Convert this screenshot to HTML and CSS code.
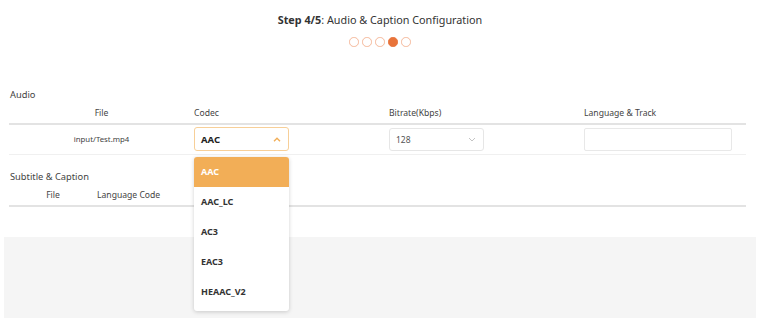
FILE: index.html
```html
<!DOCTYPE html>
<html lang="en">
<head>
  <meta charset="UTF-8" />
  <title>Audio & Caption Configuration</title>
  <link rel="stylesheet" href="styles.css">
</head>
<body>

  <header class="wizard-head">
    <h1 class="step-title"><b>Step 4/5</b>: Audio &amp; Caption Configuration</h1>
    <div class="steps">
      <span class="dot"></span>
      <span class="dot"></span>
      <span class="dot"></span>
      <span class="dot active"></span>
      <span class="dot"></span>
    </div>
  </header>

  <section class="block">
    <h2 class="block-title">Audio</h2>
    <div class="grid audio-grid head-row">
      <div class="cell center">File</div>
      <div class="cell">Codec</div>
      <div class="cell">Bitrate(Kbps)</div>
      <div class="cell">Language &amp; Track</div>
    </div>
    <div class="grid audio-grid body-row">
      <div class="cell center file-name">input/Test.mp4</div>
      <div class="cell">
        <div class="select-wrap">
          <div class="select open">
            <span class="value">AAC</span>
            <svg class="chev" width="8" height="5" viewBox="0 0 8 5"><path d="M1 4.2 L4 1.2 L7 4.2" fill="none" stroke="#f2ae57" stroke-width="1.4"/></svg>
          </div>
          <ul class="dropdown">
            <li class="selected">AAC</li>
            <li>AAC_LC</li>
            <li>AC3</li>
            <li>EAC3</li>
            <li>HEAAC_V2</li>
          </ul>
        </div>
      </div>
      <div class="cell">
        <div class="select">
          <span class="value plain">128</span>
          <svg class="chev" width="8" height="5" viewBox="0 0 8 5"><path d="M1 1 L4 4 L7 1" fill="none" stroke="#c4c4c4" stroke-width="1"/></svg>
        </div>
      </div>
      <div class="cell">
        <div class="text-input"></div>
      </div>
    </div>
  </section>

  <section class="block subtitle">
    <h2 class="block-title">Subtitle &amp; Caption</h2>
    <div class="grid sub-grid head-row">
      <div class="cell center">File</div>
      <div class="cell">Language Code</div>
    </div>
  </section>

  <div class="footer-area"></div>

</body>
</html>
```

FILE: styles.css
```css
:root {
  --color-accent: #e8733a;
  --color-dot: #f5b99b;
  --color-pick: #f2ae57;
  --color-text: #444;
  --color-line: #e3e3e3;
}

* {
  margin: 0;
  padding: 0;
  box-sizing: border-box;
}

body {
  font-family: "Noto Sans", "Liberation Sans", sans-serif;
  color: var(--color-text);
  background: white;
  font-size: 8.6px;
}

.wizard-head {
  text-align: center;
  padding-top: 11px;
}

.step-title {
  font-size: 10.8px;
  font-weight: normal;
  line-height: 18px;
  color: #333;
}

.step-title b {
  font-weight: bold;
}

.steps {
  display: flex;
  justify-content: center;
  gap: 3.4px;
  margin-top: 8px;
}

.dot {
  width: 9.5px;
  height: 9.5px;
  border-radius: 50%;
  border: 1px solid var(--color-dot);
}

.dot.active {
  background: var(--color-accent);
  border-color: var(--color-accent);
}

.block {
  padding: 0 14px 0 9px;
  margin-top: 41px;
}

.block.subtitle {
  margin-top: 15px;
}

.block-title {
  font-size: 9.3px;
  font-weight: normal;
  line-height: 14px;
  padding-left: 1px;
  margin-bottom: 2px;
}

.grid {
  display: grid;
}

.audio-grid {
  grid-template-columns: 185px 195px 195px 1fr;
}

.sub-grid {
  grid-template-columns: 88px 1fr;
}

.head-row {
  height: 21px;
  align-items: center;
  border-bottom: 2px solid var(--color-line);
  padding-bottom: 1px;
}

.body-row {
  height: 30px;
  align-items: center;
  border-bottom: 1px solid #f0f0f0;
}

.cell.center {
  text-align: center;
}

.file-name {
  font-size: 7.8px;
}

.select-wrap {
  position: relative;
  width: 95px;
}

.select {
  width: 95px;
  height: 23px;
  border: 1px solid #e6e6e6;
  border-radius: 3px;
  display: flex;
  align-items: center;
  justify-content: space-between;
  padding: 0 7px 0 6px;
}

.select.open {
  border-color: #f7cf98;
  height: 24px;
}

.value {
  font-weight: bold;
  font-size: 9.5px;
  color: #222;
}

.value.plain {
  font-weight: normal;
  font-size: 8.5px;
  color: #555;
}

.text-input {
  width: 148px;
  height: 23px;
  border: 1px solid #e8e8e8;
  border-radius: 2px;
}

.dropdown {
  position: absolute;
  top: 30px;
  left: 0;
  width: 95px;
  list-style: none;
  background: white;
  border-radius: 3px;
  padding-bottom: 4px;
  box-shadow: 0 1px 4px rgba(0,0,0,0.18);
  z-index: 2;
}

.dropdown li {
  height: 30px;
  line-height: 30px;
  padding-left: 7px;
  font-size: 9px;
  font-weight: bold;
  color: #333;
}

.dropdown li.selected {
  background: var(--color-pick);
  color: white;
  border-radius: 3px 3px 0 0;
}

.footer-area {
  margin: 30px 4px 0;
  height: 81px;
  background: #f5f5f5;
}
```
